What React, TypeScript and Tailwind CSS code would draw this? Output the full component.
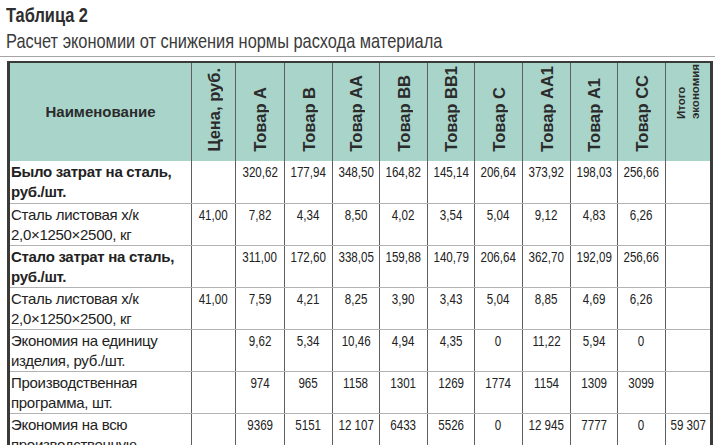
type Row = {
  name: string[]
  bold?: boolean
  price: string
  values: string[]
  total: string
}

const products = ['Товар А', 'Товар В', 'Товар АА', 'Товар ВВ', 'Товар ВВ1', 'Товар С', 'Товар АА1', 'Товар А1', 'Товар СС']

const rows: Row[] = [
  {
    name: ['Было затрат на сталь,', 'руб./шт.'],
    bold: true,
    price: '',
    values: ['320,62', '177,94', '348,50', '164,82', '145,14', '206,64', '373,92', '198,03', '256,66'],
    total: '',
  },
  {
    name: ['Сталь листовая х/к', '2,0×1250×2500, кг'],
    price: '41,00',
    values: ['7,82', '4,34', '8,50', '4,02', '3,54', '5,04', '9,12', '4,83', '6,26'],
    total: '',
  },
  {
    name: ['Стало затрат на сталь,', 'руб./шт.'],
    bold: true,
    price: '',
    values: ['311,00', '172,60', '338,05', '159,88', '140,79', '206,64', '362,70', '192,09', '256,66'],
    total: '',
  },
  {
    name: ['Сталь листовая х/к', '2,0×1250×2500, кг'],
    price: '41,00',
    values: ['7,59', '4,21', '8,25', '3,90', '3,43', '5,04', '8,85', '4,69', '6,26'],
    total: '',
  },
  {
    name: ['Экономия на единицу', 'изделия, руб./шт.'],
    price: '',
    values: ['9,62', '5,34', '10,46', '4,94', '4,35', '0', '11,22', '5,94', '0'],
    total: '',
  },
  {
    name: ['Производственная', 'программа, шт.'],
    price: '',
    values: ['974', '965', '1158', '1301', '1269', '1774', '1154', '1309', '3099'],
    total: '',
  },
  {
    name: ['Экономия на всю', 'производственную', 'программу, руб.'],
    price: '',
    values: ['9369', '5151', '12 107', '6433', '5526', '0', '12 945', '7777', '0'],
    total: '59 307',
  },
]

const colWidths = [183, 44, 49, 48, 47, 48, 47, 48, 48, 47, 48, 46]

function VerticalHead({ label }: { label: string }) {
  return (
    <th className="h-[98px] border-x border-[#5f5f5f] p-0 align-bottom">
      <div className="flex h-[98px] items-end justify-center pb-[9px]">
        <span className="rotate-180 whitespace-nowrap text-[16.5px] font-bold leading-[18px] text-[#2b2b2b] [writing-mode:vertical-rl]">
          {label}
        </span>
      </div>
    </th>
  )
}

export default function App() {
  return (
    <div className="min-h-screen overflow-hidden bg-white font-['Liberation_Sans',Arial,sans-serif]">
      <div className="pl-[6px] pt-[2px]">
        <div className="origin-left scale-x-[0.78] text-[21px] font-bold leading-[26px] text-[#2e2e2e]">Таблица 2</div>
        <div className="origin-left scale-x-[0.78] text-[21px] leading-[26px] text-[#3a3a3a]">
          Расчет экономии от снижения нормы расхода материала
        </div>
      </div>
      <div className="mt-[2px] h-px bg-[#a5a5a5]" />
      <table className="ml-[7px] mt-[4px] w-[703px] table-fixed border-collapse border-l-[3px] border-r-[3px] border-t-2 border-[#3a3a3a]">
        <colgroup>
          {colWidths.map((w, i) => (
            <col key={i} style={{ width: w }} />
          ))}
        </colgroup>
        <thead>
          <tr className="bg-[#a9d4ca]">
            <th className="h-[98px] border-x border-[#5f5f5f] p-0 text-center align-middle text-[15px] font-bold text-[#2b2b2b]">
              Наименование
            </th>
            <VerticalHead label="Цена, руб." />
            {products.map((p) => (
              <VerticalHead key={p} label={p} />
            ))}
            <th className="h-[98px] border-x border-[#5f5f5f] p-0 align-bottom">
              <div className="flex h-[98px] items-end justify-center pb-[42px]">
                <span className="rotate-180 whitespace-nowrap text-left text-[11.5px] font-bold leading-[14px] text-[#2b2b2b] [writing-mode:vertical-rl]">
                  <span className="block">Итого</span>
                  <span className="block">экономия</span>
                </span>
              </div>
            </th>
          </tr>
        </thead>
        <tbody>
          {rows.map((r, ri) => (
            <tr key={ri} className="h-[42px] align-top">
              <td className="border-x border-b border-x-[#5f5f5f] border-b-[#b3b3b3] pl-[1px] pt-[1px] text-[15px] leading-[20px] tracking-[-0.3px] text-[#222]">
                {r.name.map((l, i) => (
                  <div key={i} className={r.bold ? 'font-bold' : ''}>
                    {l}
                  </div>
                ))}
              </td>
              {[r.price, ...r.values, r.total].map((v, i) => (
                <td
                  key={i}
                  className="border-x border-b border-x-[#5f5f5f] border-b-[#b3b3b3] pt-[1px] text-center text-[14.5px] leading-[20px] text-[#222]"
                >
                  <span className="inline-block scale-x-[0.8] whitespace-nowrap">{v}</span>
                </td>
              ))}
            </tr>
          ))}
        </tbody>
      </table>
    </div>
  )
}
